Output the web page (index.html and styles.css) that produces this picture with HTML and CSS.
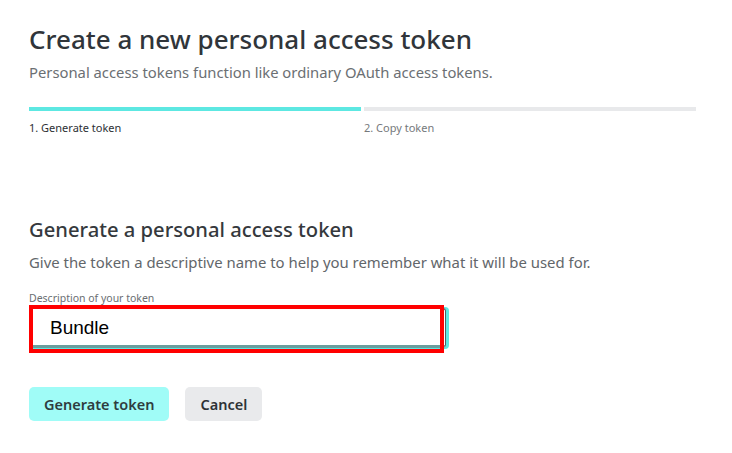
FILE: index.html
```html
<!DOCTYPE html>
<html>
<head>
<meta charset="utf-8">
<link rel="stylesheet" href="styles.css">
</head>
<body>
<div class="page">
  <h1 class="title">Create a new personal access token</h1>
  <p class="subtitle">Personal access tokens function like ordinary OAuth access tokens.</p>
  <div class="steps">
    <div class="step active">
      <div class="bar"></div>
      <div class="step-label">1. Generate token</div>
    </div>
    <div class="step">
      <div class="bar"></div>
      <div class="step-label">2. Copy token</div>
    </div>
  </div>
  <h2 class="section-title">Generate a personal access token</h2>
  <p class="section-desc">Give the token a descriptive name to help you remember what it will be used for.</p>
  <div class="field">
    <label class="field-label">Description of your token</label>
    <div class="input-wrap">
      <div class="input">Bundle</div>
      <div class="highlight"></div>
    </div>
  </div>
  <div class="actions">
    <button class="btn btn-primary">Generate token</button>
    <button class="btn btn-secondary">Cancel</button>
  </div>
</div>
</body>
</html>
```

FILE: styles.css
```css
html, body {
  margin: 0;
  padding: 0;
  background: #ffffff;
}
body {
  font-family: "Noto Sans", "Open Sans", sans-serif;
  color: #333a40;
}
.page {
  padding: 20px 0 0 29px;
  width: 667px;
}
.title {
  margin: 0;
  font-size: 26px;
  font-weight: 500;
  line-height: 38px;
  color: #30353a;
}
.subtitle {
  margin: 4px 0 0;
  font-size: 14.8px;
  line-height: 20px;
  color: #6b6f73;
}
.steps {
  display: flex;
  gap: 3px;
  margin-top: 25px;
}
.step {
  flex: 1;
}
.bar {
  height: 4px;
  background: #e8e9eb;
}
.step.active .bar {
  background: #5de8e2;
}
.step-label {
  margin-top: 10px;
  font-size: 11px;
  line-height: 14px;
  color: #76797c;
}
.step.active .step-label {
  color: #2d3034;
}
.section-title {
  margin: 80px 0 0;
  font-size: 20.2px;
  font-weight: 500;
  line-height: 28px;
  color: #35393d;
}
.section-desc {
  margin: 9px 0 0;
  font-size: 14.9px;
  line-height: 20px;
  color: #62666a;
}
.field {
  margin-top: 20px;
}
.field-label {
  display: block;
  font-size: 10.5px;
  line-height: 12px;
  color: #6a6e72;
}
.input-wrap {
  position: relative;
  width: 417px;
  margin-top: 4px;
}
.input {
  height: 40px;
  box-sizing: border-box;
  border: 1px solid #555d62;
  border-bottom: 3px solid #6b9e9e;
  border-radius: 3px;
  box-shadow: 2px 0 0 1px #5de8e2;
  padding: 5px 0 0 20px;
  font-family: "Liberation Sans", Arial, sans-serif;
  font-size: 19px;
  line-height: 28px;
  color: #000;
}
.highlight {
  position: absolute;
  left: 0;
  top: -3px;
  right: 2px;
  bottom: -5px;
  border: 4px solid #ff0000;
  pointer-events: none;
}
.actions {
  display: flex;
  gap: 16px;
  margin-top: 39px;
}
.btn {
  height: 34px;
  border: none;
  border-radius: 5px;
  padding: 0 15px;
  font-family: "Noto Sans", "Open Sans", sans-serif;
  font-size: 14.5px;
  font-weight: 600;
  color: #2f3d40;
}
.btn-primary {
  background: #a0fcf7;
}
.btn-secondary {
  background: #e9eaec;
  color: #2e3236;
}
```
